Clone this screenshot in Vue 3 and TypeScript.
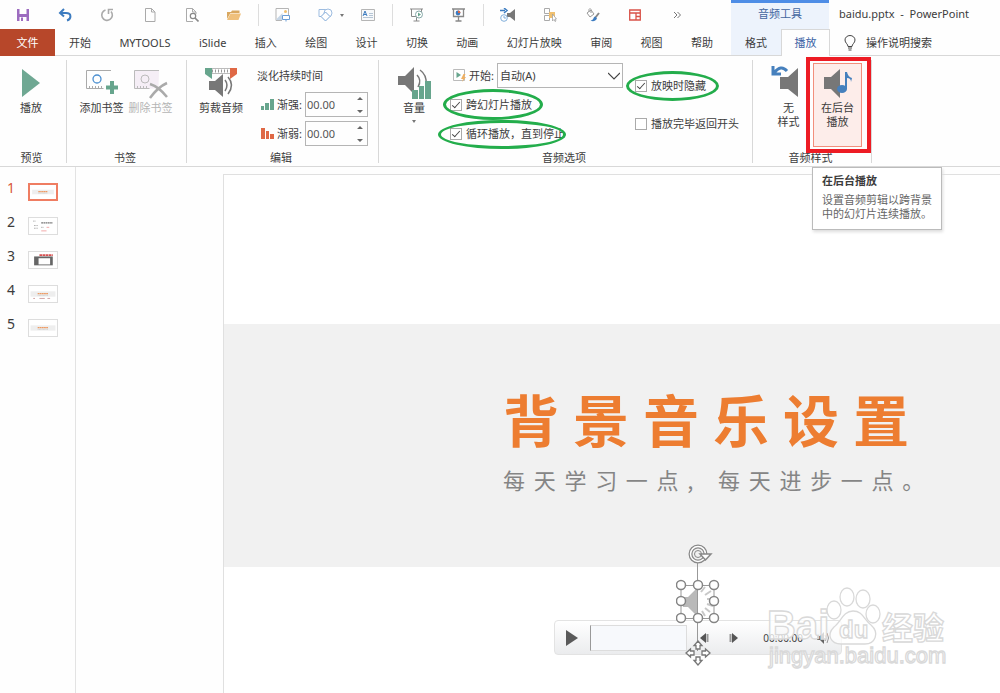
<script setup lang="ts">
import { ref } from 'vue'

const tabs = ['开始', 'MYTOOLS', 'iSlide', '插入', '绘图', '设计', '切换', '动画', '幻灯片放映', '审阅', '视图', '帮助']
const title = [...'背景音乐设置']
const subtitle = [...'每天学习一点,每天进步一点。']
const slides = [1, 2, 3, 4, 5]
const current = ref(1)
const fadeIn = ref('00.00')
const fadeOut = ref('00.00')
const start = ref('auto')
const across = ref(true)
const loop = ref(true)
const hide = ref(true)
const rewind = ref(false)
const handles = [[5, 5], [22, 5], [38, 5], [5, 21], [38, 21], [5, 38], [22, 38], [38, 38]]
</script>

<template>
  <div class="app">
    <header>
      <div class="titlebar">
        <div class="qat">
          <button aria-label="保存"><svg width="14" height="14" viewBox="0 0 14 14"><path d="M1 1h12v12H1z" fill="#9d6cc0" /><path d="M3.500 1h7v5h-7zM3.500 9h7v4h-7z" fill="#fff" /><path d="M5 9.500h2V13H5z" fill="#9d6cc0" /></svg></button>
          <button aria-label="撤消"><svg width="14" height="14" viewBox="0 0 14 14"><path d="M6 1L2 5l4 3.500M2.500 5H8c6 0 5.500 6 1 7.500" fill="none" stroke="#3d7cc0" stroke-width="2" /></svg></button>
          <button aria-label="恢复"><svg width="14" height="14" viewBox="0 0 14 14"><path d="M5.500 2A5.300 5.300 0 1 0 11 3.500M8.500 6V1.500h4.500" fill="none" stroke="#aaa" stroke-width="1.600" /></svg></button>
          <button aria-label="新建"><svg width="14" height="14" viewBox="0 0 14 14"><path d="M2.500.5h6l3.500 3.500v9.500H2.500zM8.500.5V4H12" fill="none" stroke="#aaa" /></svg></button>
          <button aria-label="打印预览"><svg width="14" height="14" viewBox="0 0 14 14"><path d="M11 6V4L7.500.5h-6v13H8M7.500.5V4H11" fill="none" stroke="#aaa" /><circle cx="8" cy="8" r="2.700" fill="#fff" stroke="#888" stroke-width="1.200" /><path d="M10 10l3.500 3.500" stroke="#888" stroke-width="1.600" /></svg></button>
          <button aria-label="打开"><svg width="16" height="14" viewBox="0 0 16 14"><path d="M1 11V4h4l1-1.500h7.500V5H4.500z" fill="#d9a860" /><path d="M4.500 5.500H15L12.500 12H1z" fill="#efc07c" /></svg></button>
          <i></i>
          <button aria-label="图片"><svg width="16" height="14" viewBox="0 0 16 14"><path d="M1 .5h12.500V7M1 .5v12h6" fill="none" stroke="#b5b5b5" /><path d="M1.500 11l6-6v7h-6z" fill="#c7d6e6" /><circle cx="10.500" cy="3.500" r="1.500" fill="#f0c070" /><path d="M7.500 7.500h7v4h-7zM11 11.500v2" fill="#fff" stroke="#6c9ed6" /></svg></button>
          <button class="with-caret" aria-label="形状"><svg width="30" height="14" viewBox="0 0 30 14"><path d="M2 1.500h7v7H2z" fill="none" stroke="#9dbce0" /><circle cx="11" cy="5" r="4" fill="#fff" stroke="#9dbce0" /><path d="M8.500 4l4.500 4.500L8.500 13 4 8.500z" fill="#fff" stroke="#7fa9d8" /><path d="M23 6h4l-2 3z" fill="#777" /></svg></button>
          <button aria-label="文本框"><svg width="14" height="12" viewBox="0 0 14 12"><path d="M.5.5h13v11H.5z" fill="#f7f9fb" stroke="#b5b5b5" /><path d="M2 7l2-5 2 5M3 5.500h2" fill="none" stroke="#3d7cc0" /><path d="M8 4.500h4M8 6.500h4M2 8.500h10" stroke="#b5c5d5" /></svg></button>
          <i></i>
          <button aria-label="从头开始"><svg width="14" height="14" viewBox="0 0 14 14"><path d="M0 1h13M1.500 1v7.500h10V1M6.500 9v4M3.500 13h6" fill="none" stroke="#888" /><circle cx="9" cy="6.500" r="3.500" fill="#fff" stroke="#8aa" /><path d="M8 4.500v4l3-2z" fill="#67a58d" /></svg></button>
          <button aria-label="放映"><svg width="14" height="14" viewBox="0 0 14 14"><path d="M0 1h13M1.500 1v7.500h10V1M6.500 9v4M3.500 13h6" fill="none" stroke="#888" stroke-width="1.300" /><circle cx="6" cy="5" r="2.400" fill="#3d7cc0" /><path d="M6 5V2.500A2.500 2.500 0 0 1 8.500 5z" fill="#df6845" /></svg></button>
          <i></i>
          <button aria-label="音频延迟"><svg width="16" height="14" viewBox="0 0 16 14"><path d="M7 5h3l5-4v12l-5-4H7z" fill="#777" /><path d="M0 2.500h5M4 0l3 2.500L4 5" fill="none" stroke="#3d7cc0" stroke-width="1.500" /><circle cx="4" cy="10" r="3.300" fill="#fff" stroke="#80add9" /><path d="M4 8v2h2" fill="none" stroke="#80add9" /></svg></button>
          <button aria-label="选择窗格"><svg width="14" height="14" viewBox="0 0 14 14"><path d="M1.500.5h5v5h-5zM1.500 7.500h5v5h-5z" fill="#fff" stroke="#aaa" /><path d="M6 4h6v6H6z" fill="#f0c070" /><path d="M9.500 6v7l1.500-1.500 1 2 1-.5-1-2h1.500z" fill="#fff" stroke="#999" stroke-width=".7" /></svg></button>
          <button aria-label="填充"><svg width="16" height="14" viewBox="0 0 16 14"><path d="M2 5l4-3 3 4-4 3zM4 4V1.500q1-2 2 0V5" fill="#fff" stroke="#999" /><path d="M14 5l-4 5" stroke="#888" stroke-width="2" /><path d="M10 8.500l2 1.700C10.500 14 7 13.500 5.500 12.500c3 0 2.500-3 4.500-4z" fill="#3d7cc0" /></svg></button>
          <button aria-label="版式"><svg width="12" height="12" viewBox="0 0 12 12"><path d="M.7 1h10.600v10H.7zM.7 4h10.600M7 4v7M7 7.500h4" fill="none" stroke="#d9534a" stroke-width="1.300" /></svg></button>
          <button aria-label="更多"><svg width="8" height="8" viewBox="0 0 8 8"><path d="M1 1l3 3-3 3M4.500 1l3 3-3 3" fill="none" stroke="#777" /></svg></button>
        </div>
        <div class="context">音频工具</div>
        <div class="doc">baidu.pptx&nbsp; -&nbsp; PowerPoint</div>
      </div>
      <nav class="tabs">
        <button class="file">文件</button>
        <div class="main-tabs"><button v-for="t in tabs" :key="t">{{ t }}</button></div>
        <button class="format">格式</button>
        <button class="active">播放</button>
        <button class="tell"><svg width="12" height="16" viewBox="0 0 12 16"><path d="M4 11.500C4 9 1 8 1 5a5 4.500 0 0 1 10 0c0 3-3 4-3 6.500zM4 13h4M4.500 15h3" fill="none" stroke="#444" /></svg>操作说明搜索</button>
      </nav>
    </header>

    <section class="ribbon">
      <div class="group preview">
        <div class="body">
          <button class="big"><svg width="20" height="32" viewBox="0 0 20 32"><path d="M1 2l18 14L1 30z" fill="#6fa893" /></svg>播放</button>
        </div>
        <div class="caption">预览</div>
      </div>

      <div class="group bookmarks">
        <div class="body">
          <button class="big"><svg width="32" height="32" viewBox="0 0 32 32"><path d="M25 3.500H.5v18h17M3.500 21v-2M6.500 21v-2M9.500 21v-2M12.500 21v-2M15.500 21v-2" fill="none" stroke="#aaa" /><circle cx="11" cy="12" r="4" fill="none" stroke="#4b8fd0" stroke-width="1.300" /><path d="M26 14v13M20 20.500h12" stroke="#67a58d" stroke-width="4" /></svg>添加书签</button>
          <button class="big" disabled><svg width="34" height="32" viewBox="0 0 34 32"><path d="M25 3.500H.5v18h24z" fill="#f5eef6" /><path d="M25 3.500H.5v18h15M3.500 21v-2M6.500 21v-2M9.500 21v-2M12.500 21v-2" fill="none" stroke="#bbb" /><circle cx="11" cy="12" r="4" fill="none" stroke="#bbb" /><path d="M16 17q9 3 17 13M33 16q-9 4-17 15" fill="none" stroke="#aaa" stroke-width="2.500" /></svg>删除书签</button>
        </div>
        <div class="caption">书签</div>
      </div>

      <div class="group edit">
        <div class="body">
          <button class="big"><svg width="34" height="32" viewBox="0 0 34 32"><path d="M8 4h18" stroke="#999" stroke-width="3" stroke-dasharray="1 2" /><path d="M8 1.500h18M8 6.500h18" fill="none" stroke="#bbb" /><path d="M1 1h7v11L1 7z" fill="#67a58d" /><path d="M33 1h-7v11l7-5z" fill="#df6845" /><path d="M5 14h6l8-7v23l-8-7H5z" fill="#777" /><path d="M21 13q4 5 0 11M24 10q7 8 0 17" fill="none" stroke="#777" stroke-width="1.500" /></svg>剪裁音频</button>
          <div class="fades">
            <div class="head">淡化持续时间</div>
            <label class="field"><svg width="13" height="11" viewBox="0 0 13 11"><path d="M0 7h3v4H0zM4 4h4v7H4zM9 0h4v11H9z" fill="#67a58d" /></svg><span>渐强:</span>
              <span class="spin"><input v-model="fadeIn" type="text"><svg width="6" height="18" viewBox="0 0 6 18"><path d="M0 4l3-3 3 3zM0 14l3 3 3-3z" fill="#666" /></svg></span></label>
            <label class="field"><svg width="13" height="11" viewBox="0 0 13 11"><path d="M0 0h4v11H0zM5 3h3v8H5zM9 6h4v5H9z" fill="#df6845" /></svg><span>渐弱:</span>
              <span class="spin"><input v-model="fadeOut" type="text"><svg width="6" height="18" viewBox="0 0 6 18"><path d="M0 4l3-3 3 3zM0 14l3 3 3-3z" fill="#666" /></svg></span></label>
          </div>
        </div>
        <div class="caption">编辑</div>
      </div>

      <div class="group options">
        <div class="body">
          <button class="big"><svg width="34" height="34" viewBox="0 0 34 34"><path d="M1 10h7l9-9v27l-9-9H1z" fill="#777" /><path d="M20 9q5 5 1 12M23 4q7 5 6 14" fill="none" stroke="#777" stroke-width="1.500" /><path d="M15 24h6v9h-6zM22 20h5v13h-5zM28 15h6v18h-6z" fill="#67a58d" /></svg>音量<svg class="caret" width="4" height="3" viewBox="0 0 4 3"><path d="M0 0h4L2 3z" fill="#777" /></svg></button>
          <div class="col first">
            <label class="start"><svg width="13" height="13" viewBox="0 0 13 13"><path d="M.5.5h11v11H.5z" fill="#fff" stroke="#bbb" /><path d="M3.500 3v6L8 6z" fill="#67a58d" /><path d="M10.500 5L8 10h2l-1 3 4-5h-2l1.500-3z" fill="#f0b060" /></svg><span>开始:</span>
              <span class="select"><select v-model="start"><option value="auto">自动(A)</option></select><svg width="12" height="8" viewBox="0 0 12 8"><path d="M0 1l6 6 6-6" fill="none" stroke="#444" stroke-width="1.200" /></svg></span></label>
            <label class="check"><input v-model="across" type="checkbox">跨幻灯片播放<b class="ring r1"></b></label>
            <label class="check"><input v-model="loop" type="checkbox">循环播放，直到停止<b class="ring r2"></b></label>
          </div>
          <div class="col second">
            <label class="check"><input v-model="hide" type="checkbox">放映时隐藏<b class="ring r3"></b></label>
            <label class="check"><input v-model="rewind" type="checkbox">播放完毕返回开头</label>
          </div>
        </div>
        <div class="caption">音频选项</div>
      </div>

      <div class="group styles">
        <div class="body">
          <button class="big"><svg width="36" height="34" viewBox="0 0 36 34"><path d="M9 11h8l10-9v29l-10-8H9z" fill="#777" /><path d="M2 0v8h8M3 7q7-9 13-2" fill="none" stroke="#4680bd" stroke-width="3" /></svg>无<br>样式</button>
          <button class="big chosen"><svg width="30" height="34" viewBox="0 0 30 34"><path d="M1 11h7l9-8v29l-9-9H1z" fill="#777" /><ellipse cx="19" cy="23" rx="5" ry="4" fill="#4680bd" /><path d="M22 23V6h2q1 5 5 6l-1 4q0-4-4-4v11z" fill="#4680bd" /></svg>在后台<br>播放</button>
        </div>
        <div class="caption">音频样式</div>
        <div class="marker"></div>
        <div class="tip" role="tooltip"><strong>在后台播放</strong><p>设置音频剪辑以跨背景中的幻灯片连续播放。</p></div>
      </div>
    </section>

    <main>
      <aside>
        <button v-for="n in slides" :key="n" class="thumb" :class="{ on: n === current }" @click="current = n">
          <span>{{ n }}</span>
          <svg width="30" height="18" viewBox="0 0 30 18">
            <rect x=".5" y=".5" width="29" height="17" fill="#fff" />
            <g v-if="n === 1 || n === 4 || n === 5"><path d="M1 6h28v6H1z" fill="#eee" /><path d="M9 8.500h12" stroke="#ee9a62" stroke-width="1.500" stroke-dasharray="2 .4" /><path d="M9 10.500h12" stroke="#bbb" stroke-width=".7" stroke-dasharray="1 .5" /></g>
            <path v-if="n === 4" d="M4 14h2M11 14h6M20 14h3" stroke="#c99" />
            <g v-if="n === 2"><path d="M4 3.500h3M5 8.500h4M5 11.500h4M13 10.500h3" stroke="#999" stroke-dasharray="1 .5" /><path d="M13 5.500h13" stroke="#777" stroke-width="1.500" stroke-dasharray="2 .5" /><path d="M19 10.500h3M13 14.500h6" stroke="#f0a0a0" /></g>
            <g v-if="n === 3"><path d="M11 3.500h15" stroke="#d65050" stroke-width="2" stroke-dasharray="3 .5" /><path d="M5 5h21v10H5z" fill="#666" /><path d="M10 7h13v7H10z" fill="#fff" /></g>
          </svg>
        </button>
      </aside>
      <section class="stage">
        <article class="slide">
          <div class="band">
            <h1><span v-for="(c, i) in title" :key="i">{{ c }}</span></h1>
            <p><span v-for="(c, i) in subtitle" :key="i">{{ c }}</span></p>
          </div>
          <div class="media">
            <div class="player">
              <button aria-label="播放"><svg width="14" height="16" viewBox="0 0 14 16"><path d="M1 0l12 8-12 8z" fill="#5a5a5a" /></svg></button>
              <div class="track"></div>
              <button class="back" aria-label="后退"><svg width="9" height="10" viewBox="0 0 9 10"><path d="M6 0v10L0 5z" fill="#555" /><path d="M7.500 1v8" stroke="#999" stroke-width="2" /></svg></button>
              <button class="forward" aria-label="前进"><svg width="9" height="10" viewBox="0 0 9 10"><path d="M3 0v10l6-5z" fill="#555" /><path d="M1.500 1v8" stroke="#999" stroke-width="2" /></svg></button>
              <time>00:00.00</time>
              <svg width="14" height="12" viewBox="0 0 14 12"><path d="M1 4h3l4-4v12L4 8H1z" fill="#666" /><path d="M9 3q2 3 0 6M11 1q3 5 0 10" fill="none" stroke="#999" /></svg>
            </div>
            <svg class="object" width="44" height="124" viewBox="0 0 44 124">
              <path d="M21.500 20v89M5 43.500h33v33H5z" fill="none" stroke="#999" />
              <path d="M7 55h5l9-9v28l-9-9H7z" fill="#b9b9b9" />
              <path d="M25 50l4-5M29 53l6-4M31 57h6M31 62l6 2M29 66l5 4M26 69l3 5" stroke="#c8c8c8" stroke-width="2" />
              <circle v-for="(h, i) in handles" :key="i" :cx="h[0]" :cy="h[1] + 38" r="4.500" fill="#fff" stroke="#858585" stroke-width="1.500" />
              <circle cx="22" cy="12" r="7.500" fill="none" stroke="#888" stroke-width="4" />
              <circle cx="22" cy="12" r="7.500" fill="none" stroke="#fff" stroke-width="1.500" />
              <circle cx="22" cy="12" r="3.500" fill="none" stroke="#888" />
              <path d="M24 12h11l-5.500 6z" fill="#fff" stroke="#888" stroke-width="1.500" />
            </svg>
            <svg class="cursor" width="26" height="26" viewBox="0 0 26 26"><path d="M13 1l4 4.500h-2V9h-4V5.500H9zM25 13l-4.500 4v-2H17v-4h3.500V9zM13 25l-4-4.500h2V17h4v3.500h2zM1 13l4.500-4v2H9v4H5.500v2z" fill="#fff" stroke="#777" stroke-width="1.300" /></svg>
          </div>
          <svg class="watermark" width="190" height="96" viewBox="0 0 190 96">
            <g fill="#fff" fill-opacity=".75" stroke="#d9d9d9" stroke-width="1.300">
              <text class="latin" x="6" y="62" font-size="40">Bai</text>
              <ellipse cx="73" cy="33" rx="7" ry="9" /><ellipse cx="86" cy="20" rx="7" ry="9" /><ellipse cx="102" cy="22" rx="7" ry="9" /><ellipse cx="112" cy="37" rx="7" ry="9" />
              <path d="M92 34c10 0 11 9 18 14 9 8 4 19-6 19H80c-10 0-15-9-7-17 7-5 9-16 19-16z" />
              <text class="latin" x="78" y="61" font-size="24">du</text>
              <text class="cjk" x="121" y="62" font-size="31">经验</text>
              <text class="url" x="8" y="86" font-size="22">jingyan.baidu.com</text>
            </g>
          </svg>
        </article>
      </section>
    </main>
  </div>
</template>

<style>
body { margin: 0; }
</style>

<style scoped>
* { box-sizing: border-box; }
.app { min-height: 100vh; display: flex; flex-direction: column; background: #fefefe; color: #3c3c3c; font: 11px/14px "Noto Sans", "Noto Sans CJK SC", sans-serif; overflow: hidden; }
button { padding: 0; border: 0; background: none; color: inherit; font: inherit; }
input, select { font: inherit; color: inherit; }
svg { display: block; flex: none; }
.titlebar { display: flex; height: 29px; }
.qat { display: flex; flex: 0 0 731px; padding: 0 33px 0 2px; align-items: center; }
.qat button { flex: 1 1 0; min-width: 0; height: 28px; display: flex; align-items: center; justify-content: center; }
.qat .with-caret svg { margin-right: -14px; }
.qat i { width: 7px; height: 22px; background: linear-gradient(#ddd, #ddd) center / 1px 100% no-repeat; }
.context { width: 98px; border-top: 3px solid #4e8de6; background: #edf3fc; color: #44669f; text-align: center; line-height: 22px; }
.doc { padding-left: 10px; line-height: 27px; white-space: nowrap; }
.tabs { display: flex; height: 27px; box-shadow: inset 0 -1px #d8d8d8; }
.file { width: 55px; background: #b7472a; color: #fff; }
.main-tabs { flex: 0 0 676px; display: flex; justify-content: space-between; padding: 0 18px 0 14px; }
.format { width: 50px; background: #edf3fc; box-shadow: inset 0 -1px #d8d8d8; }
.active { width: 49px; background: #fefefe; color: #3a62a5; border: 1px solid #d8d8d8; border-bottom: 0; }
.tell { display: flex; align-items: center; gap: 10px; padding-left: 14px; }
.ribbon { display: flex; height: 111px; border-bottom: 1px solid #d8d8d8; }
.group { position: relative; display: flex; flex-direction: column; margin: 4px 0 3px; border-right: 1px solid #d8d8d8; }
.preview { width: 67px; }
.bookmarks { width: 120px; }
.edit { width: 192px; }
.options { width: 374px; }
.styles { width: 119px; }
.body { flex: 1; display: flex; align-items: flex-start; }
.caption { text-align: center; line-height: 10px; padding-right: 3px; }
.big { display: flex; flex-direction: column; align-items: center; white-space: nowrap; padding-top: 5px; }
.big svg { height: 36px; }
.preview .big { width: 62px; }
.bookmarks .big { width: 49px; }
.bookmarks .body { padding-left: 10px; }
.big:disabled { color: #b5b5b5; }
.edit .big { width: 44px; margin-left: 12px; }
.fades { display: flex; flex-direction: column; gap: 4px; margin-left: 14px; }
.head { height: 28px; line-height: 32px; }
.field { display: flex; align-items: center; height: 25px; margin-left: 4px; }
.field > span:nth-of-type(1) { width: 31px; padding-left: 3px; white-space: nowrap; }
.spin { display: flex; align-items: center; width: 63px; height: 25px; border: 1px solid #b5b5b5; padding-right: 4px; }
.spin input { flex: 1; min-width: 0; width: 0; border: 0; padding: 0 0 0 1px; background: none; color: #555; }
.options .big { width: 50px; margin-left: 10px; }
.options .big .caret { height: 3px; margin-top: 5px; }
.col { display: flex; flex-direction: column; }
.first { margin-left: 11px; width: 173px; gap: 9px; padding-top: 3px; }
.start { display: flex; align-items: center; height: 25px; margin-bottom: -2px; padding-left: 3px; white-space: nowrap; }
.start > span:nth-of-type(1) { width: 31px; padding-left: 3px; }
.select { position: relative; flex: 1; display: flex; }
.select select { appearance: none; width: 100%; height: 25px; border: 1px solid #b5b5b5; border-radius: 0; background: none; padding: 0 2px; }
.select svg { position: absolute; right: 3px; top: 9px; pointer-events: none; }
.check { position: relative; display: flex; align-items: center; gap: 4px; height: 20px; white-space: nowrap; }
.check input { appearance: none; width: 12px; height: 12px; margin: 0; border: 1px solid #aaa; background: #fff; display: grid; place-items: center; }
.check input:checked::before { content: ""; width: 7px; height: 3px; border: solid #444; border-width: 0 0 1px 1px; transform: rotate(-48deg); margin-bottom: 2px; }
.second { gap: 18px; padding-top: 16px; margin-left: 12px; }
.ring { position: absolute; border: 3px solid #23ad4b; border-radius: 50%; pointer-events: none; }
.r1 { left: -7px; top: -6px; width: 100px; height: 31px; }
.r2 { left: -12px; top: -4px; width: 128px; height: 29px; }
.r3 { left: -9px; top: -5px; width: 93px; height: 30px; }
.styles .big { width: 49px; }
.styles .body { padding-left: 11px; }
.styles .chosen { margin-top: 3px; padding-top: 1px; height: 84px; background: #fdedea; border: 1px solid #f28f7c; }
.marker { position: absolute; left: 53px; top: -3px; width: 65px; height: 96px; border: 4px solid #ed1c24; pointer-events: none; }
.tip { position: absolute; z-index: 3; left: 59px; top: 107px; width: 130px; padding: 6px 8px 8px 9px; border: 1px solid #bbb; background: #fff; box-shadow: 1px 2px 3px #ddd; }
.tip p { margin: 5px 0 0; color: #666; }
main { flex: 1; display: flex; }
aside { flex: none; width: 76px; border-right: 1px solid #e3e3e3; display: flex; flex-direction: column; gap: 16px; padding-top: 16px; }
.thumb { display: flex; gap: 13px; padding-left: 7px; height: 18px; font-size: 14px; line-height: 10px; }
.thumb span { width: 8px; }
.thumb svg { border: 1px solid #ddd; }
.thumb.on { color: #d9563b; }
.thumb.on svg { border: 2px solid #ef7d62; }
.stage { flex: 1; display: flex; min-width: 0; padding: 7px 0 0 147px; }
.slide { position: relative; flex: 1; min-width: 0; border: solid #e0e0e0; border-width: 1px 0 0 1px; padding-top: 149px; background: #fff; }
.band { height: 243px; padding: 56px 0 0 279px; background: #f1f1f1; }
.band h1 { display: flex; gap: 14px; margin: 0; color: #ed7d31; font-size: 56px; line-height: 76px; font-weight: 700; font-family: "Noto Sans CJK SC", sans-serif; }
.band p { display: grid; grid-template-columns: repeat(14, 1fr); width: 430px; margin: 7px 0 0; color: #858585; font-size: 22px; line-height: 32px; font-family: "Noto Sans CJK SC", sans-serif; }
.media { position: relative; width: 288px; margin: 53px 0 0 330px; }
.player { display: flex; align-items: center; height: 35px; border: 1px solid #e3e3e3; border-radius: 4px; background: linear-gradient(#fff, #ebecee); padding: 0 11px 0 10px; }
.track { width: 98px; height: 26px; margin-left: 11px; border: 1px solid #ddd; border-left-color: #999; background: #f7f9fc; }
.back { margin-left: 13px; }
.forward { margin-left: 20px; }
.player time { margin-left: 25px; width: 43px; font-size: 10px; color: #444; }
.player > svg { margin-left: 10px; }
.object { position: absolute; left: 122px; top: -78px; }
.cursor { position: absolute; left: 131px; top: 20px; }
.watermark { position: absolute; left: 537px; top: 402px; }
.latin { font-family: "Liberation Sans", sans-serif; font-weight: 700; }
.url { font-family: "Liberation Sans", sans-serif; }
.cjk { font-family: "Noto Sans CJK SC", sans-serif; font-weight: 700; }
</style>
